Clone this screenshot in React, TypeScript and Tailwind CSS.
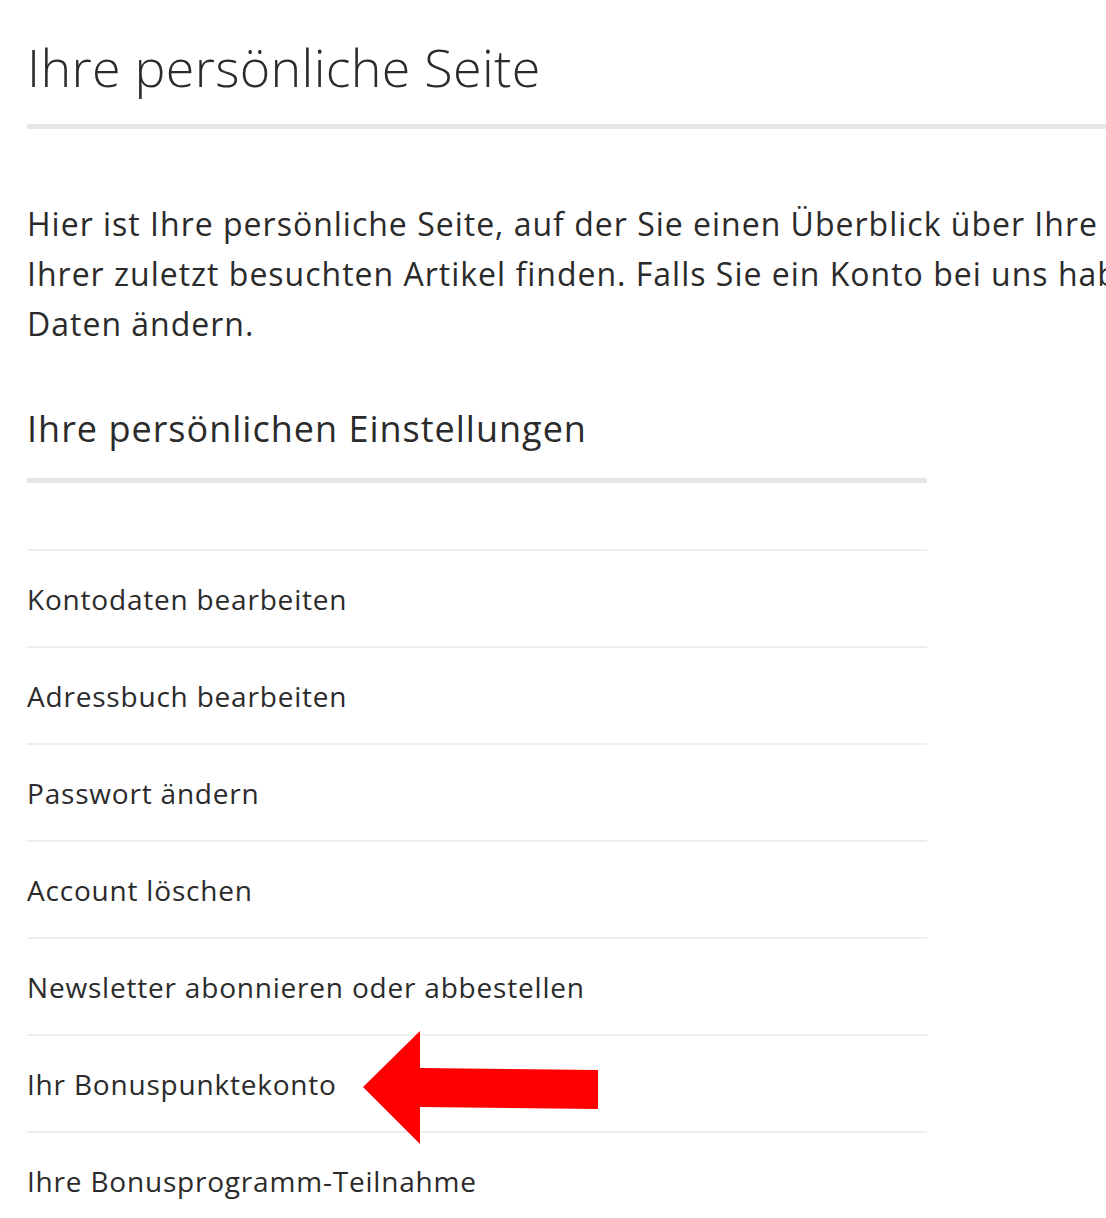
import React from 'react';

const items = [
    'Kontodaten bearbeiten',
    'Adressbuch bearbeiten',
    'Passwort ändern',
    'Account löschen',
    'Newsletter abonnieren oder abbestellen',
    'Ihr Bonuspunktekonto',
    'Ihre Bonusprogramm-Teilnahme',
];

export default function App() {
    return (
        <div className="relative w-[1106px] h-[1218px] overflow-hidden bg-white text-[#2b2b2b] font-['Open_Sans',sans-serif]">
            <div className="w-[1400px] pl-[27px]">
                <h1 className="pt-[36px] text-[52px] leading-[62px] font-light tracking-[0.3px]">Ihre persönliche Seite</h1>
                <div className="mt-[26px] h-[5px] bg-[#e6e6e6]" />

                <p className="mt-[70px] text-[32px] leading-[50px] tracking-[1px] whitespace-nowrap">
                    Hier ist Ihre persönliche Seite, auf der Sie einen Überblick über Ihre Bestellungen und eine Liste
                    <br />
                    Ihrer zuletzt besuchten Artikel finden. Falls Sie ein Konto bei uns haben, können Sie hier Ihre
                    <br />
                    Daten ändern.
                </p>

                <div className="w-[900px]">
                    <h2 className="mt-[58px] text-[36px] leading-[44px] font-normal tracking-[1px]">Ihre persönlichen Einstellungen</h2>
                    <div className="mt-[27px] h-[5px] bg-[#e6e6e6]" />

                    <ul className="mt-[66px] border-t-2 border-[#eeeeee]">
                        {items.map(item => (
                            <li key={item} className="h-[97px] flex items-center border-b-2 border-[#eeeeee] text-[28px] tracking-[0.8px]">
                                {item}
                            </li>
                        ))}
                    </ul>
                </div>
            </div>

            {/* red arrow pointing at the bonus account row */}
            <svg className="absolute left-[360px] top-[1028px]" width="242" height="120" viewBox="360 1028 242 120">
                <polygon points="363,1087 420,1031 420,1068 598,1070 598,1109 420,1107 420,1144" fill="#ff0000" />
            </svg>
        </div>
    );
}
